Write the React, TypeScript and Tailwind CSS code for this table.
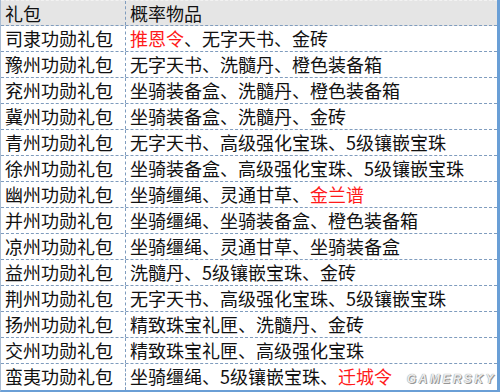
const rows: { name: string; items: { text: string; red?: boolean }[] }[] = [
  { name: "司隶功勋礼包", items: [{ text: "推恩令", red: true }, { text: "、无字天书、金砖" }] },
  { name: "豫州功勋礼包", items: [{ text: "无字天书、洗髓丹、橙色装备箱" }] },
  { name: "兖州功勋礼包", items: [{ text: "坐骑装备盒、洗髓丹、橙色装备箱" }] },
  { name: "冀州功勋礼包", items: [{ text: "坐骑装备盒、洗髓丹、金砖" }] },
  { name: "青州功勋礼包", items: [{ text: "无字天书、高级强化宝珠、5级镶嵌宝珠" }] },
  { name: "徐州功勋礼包", items: [{ text: "坐骑装备盒、高级强化宝珠、5级镶嵌宝珠" }] },
  { name: "幽州功勋礼包", items: [{ text: "坐骑缰绳、灵通甘草、" }, { text: "金兰谱", red: true }] },
  { name: "并州功勋礼包", items: [{ text: "坐骑缰绳、坐骑装备盒、橙色装备箱" }] },
  { name: "凉州功勋礼包", items: [{ text: "坐骑缰绳、灵通甘草、坐骑装备盒" }] },
  { name: "益州功勋礼包", items: [{ text: "洗髓丹、5级镶嵌宝珠、金砖" }] },
  { name: "荆州功勋礼包", items: [{ text: "无字天书、高级强化宝珠、5级镶嵌宝珠" }] },
  { name: "扬州功勋礼包", items: [{ text: "精致珠宝礼匣、洗髓丹、金砖" }] },
  { name: "交州功勋礼包", items: [{ text: "精致珠宝礼匣、高级强化宝珠" }] },
  { name: "蛮夷功勋礼包", items: [{ text: "坐骑缰绳、5级镶嵌宝珠、" }, { text: "迁城令", red: true }] },
];

const font = { fontFamily: '"Microsoft YaHei", "Noto Sans CJK SC", sans-serif' };

const App = () => {
  return (
    <div className="w-[500px] h-[392px] bg-white overflow-hidden relative" style={font}>
      <div className="w-[500px] border-l border-[#a9bcd3] border-r-[3px] border-r-[#6a9fd6] border-b-2 border-b-[#6a9fd6]">
        {/* header */}
        <div className="grid grid-cols-[125px_1fr] h-[26px] bg-[#e5e5e5] border-t border-t-[#f2f2f2] border-b border-dashed border-b-[#7f9cbe]">
          <div className="pl-[4px] text-[18px] leading-[24px] text-[#111] border-r border-dashed border-r-[#7f9cbe]">礼包</div>
          <div className="pl-[4px] text-[18px] leading-[24px] text-[#111]">概率物品</div>
        </div>

        {rows.map((row, i) => (
          <div
            key={i}
            className={`grid grid-cols-[125px_1fr] h-[26px] ${i < rows.length - 1 ? "border-b border-dashed border-b-[#7f9cbe]" : ""}`}
          >
            <div className="pl-[4px] text-[18px] leading-[25px] text-[#111] whitespace-nowrap border-r border-dashed border-r-[#7f9cbe]">
              {row.name}
            </div>
            <div className="pl-[4px] text-[18px] leading-[25px] text-[#111] whitespace-nowrap">
              {row.items.map((it, j) => (
                <span key={j} className={it.red ? "text-[#ff1a1a]" : ""}>
                  {it.text}
                </span>
              ))}
            </div>
          </div>
        ))}
      </div>

      {/* watermark */}
      <div
        className="absolute right-[4px] bottom-[7px] text-[12px] leading-[12px] font-black italic tracking-[2.5px] text-[#ececec]"
        style={{ fontFamily: '"Liberation Sans", sans-serif', textShadow: "0 0 1px #777, 1px 1px 0 #9a9a9a" }}
      >
        GAMERSKY
      </div>
    </div>
  );
};

export default App;
